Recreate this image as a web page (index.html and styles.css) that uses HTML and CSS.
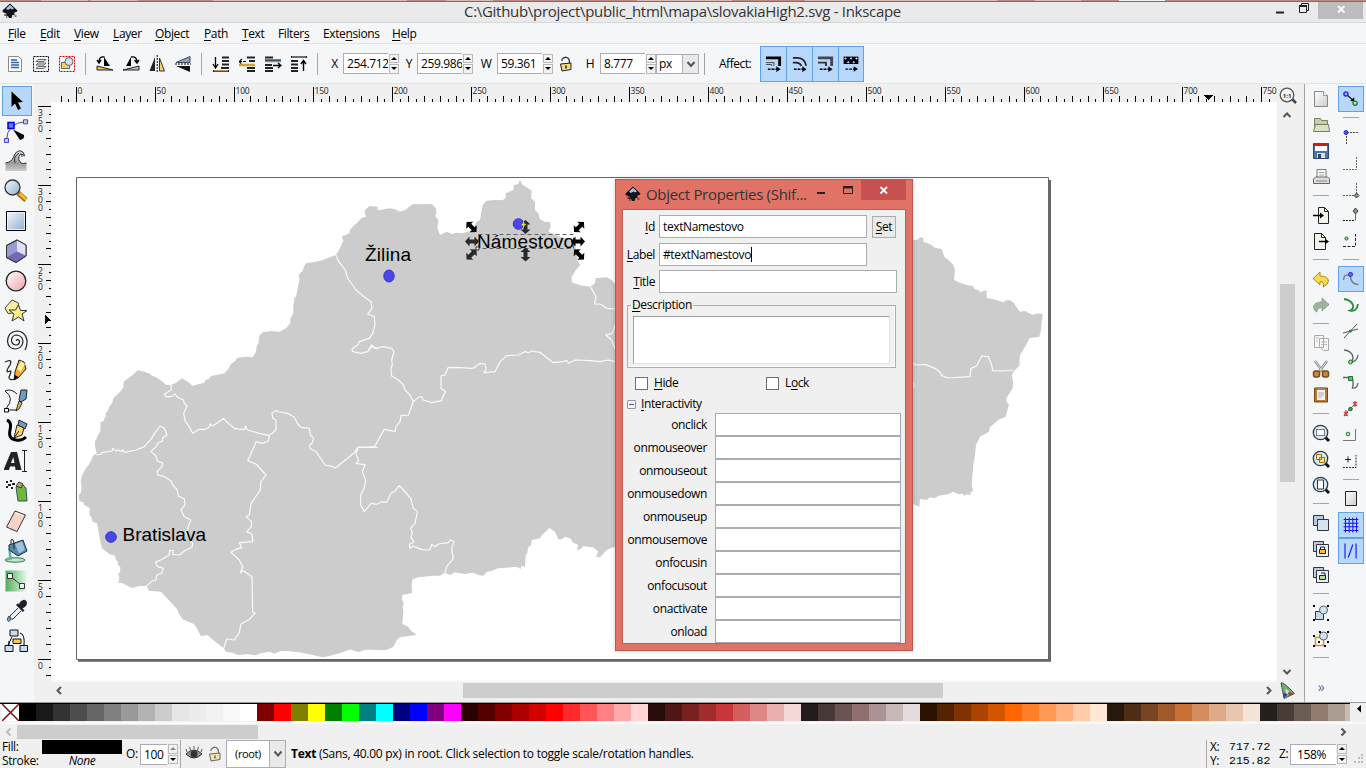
FILE: index.html
```html
<!DOCTYPE html>
<html lang="en">
<head>
<meta charset="utf-8">
<title>slovakiaHigh2.svg - Inkscape</title>
<link rel="stylesheet" href="styles.css">
</head>
<body>
<svg class="defs" width="0" height="0">
  <defs>
    <linearGradient id="gBlue" x1="0" y1="0" x2="1" y2="1"><stop offset="0" stop-color="#f4f9fd"/><stop offset="1" stop-color="#8fb0cf"/></linearGradient>
    <linearGradient id="gGrey" x1="0" y1="0" x2="1" y2="1"><stop offset="0" stop-color="#fff"/><stop offset="1" stop-color="#ccc"/></linearGradient>
    <linearGradient id="gWave" x1="0" y1="0" x2="0" y2="1"><stop offset="0" stop-color="#ddd"/><stop offset=".6" stop-color="#999"/><stop offset="1" stop-color="#ccc"/></linearGradient>
    <linearGradient id="gGreen" x1="0" y1="0" x2="1" y2="0"><stop offset="0" stop-color="#4caf5a"/><stop offset="1" stop-color="#e6f7e6"/></linearGradient>
    <linearGradient id="gPink" x1="0" y1="0" x2="1" y2="1"><stop offset="0" stop-color="#fff"/><stop offset="1" stop-color="#f2a0a8"/></linearGradient>
    <symbol id="logo" viewBox="0 0 16 16"><path d="M8 0.5L15.500 7.500Q15.500 9 13 9.300L12 10.500L13.500 11.500L10.500 12L9.500 15L7 15L6 13L3 12.500L5 11L0.800 9Q0 8 1 7Z" fill="#11131a"/><path d="M8 1.800L12 5.500L10 6.500L8.500 5.600L6 7L4 5.800Z" fill="#a9bfd8"/><path d="M2 12h2M12.500 13h2M4 14h1.500" stroke="#222"/></symbol>
    <symbol id="lock" viewBox="0 0 16 16"><path d="M4 5V3.500Q6 .5 9 1.500Q11.500 2.500 11.500 6V8" fill="none" stroke="#333" stroke-width="1.300"/><path d="M2.500 8L13 7V13.500L4 15Z" fill="#f0dc82" stroke="#222"/><path d="M8 9.500v3" stroke="#222" stroke-width="1.500"/></symbol>
    <symbol id="handle" viewBox="-8 -8 16 16"><path d="M-7 0L-2.500-5V-2H2.500V-5L7 0L2.500 5V2H-2.500V5Z"/></symbol>
  </defs>
</svg>

<div class="backdrop"></div>
<header class="titlebar">
  <svg class="app-logo" width="16" height="16"><use href="#logo"/></svg>
  <h1 class="title">C:\Github\project\public_html\mapa\slovakiaHigh2.svg - Inkscape</h1>
  <div class="win-buttons">
    <svg width="24" height="20"><path d="M8 10.500h8" stroke="#222" stroke-width="2"/></svg>
    <svg width="26" height="20"><path d="M7.500 4.500h7v6h-7zM9.500 4V1.500h7v7H15" fill="none" stroke="#222"/><path d="M7 4h8" stroke="#222" stroke-width="2"/></svg>
    <svg class="close" width="45" height="17"><path d="M20 4l6.500 6.500M26.500 4L20 10.500" stroke="#fff" stroke-width="1.800"/></svg>
  </div>
</header>
<nav class="menubar">
  <span style="width:32px"><u>F</u>ile</span><span style="width:34px"><u>E</u>dit</span><span style="width:39px"><u>V</u>iew</span><span style="width:42px"><u>L</u>ayer</span><span style="width:49px"><u>O</u>bject</span><span style="width:38px"><u>P</u>ath</span><span style="width:36px"><u>T</u>ext</span><span style="width:45px">Filter<u>s</u></span><span style="width:69px">Exte<u>n</u>sions</span><span><u>H</u>elp</span>
</nav>

<section class="toolbar">
  <svg class="ic" viewBox="0 0 24 24"><path d="M5.500 4.500h10l3 3v12h-13z" fill="#fff" stroke="#889"/><path d="M8 8h6M8 10.500h8M8 13h8M8 15.500h8" stroke="#2e62ad" stroke-width="1.500"/></svg>
  <svg class="ic" viewBox="0 0 24 24"><path d="M4.500 4.500h15v15h-15z" fill="none" stroke="#000" stroke-dasharray="2 1"/><path d="M7 16.500l2-2h8l-2 2zM7 13l2-2h8l-2 2zM7 9.500l2-2h8l-2 2z" fill="#e8e8e8" stroke="#666"/></svg>
  <svg class="ic" viewBox="0 0 24 24"><path d="M4.500 4.500h15v15h-15z" fill="none" stroke="#c00" stroke-dasharray="2 1"/><path d="M6.500 10.500h8v6h-8z" fill="#f6cf63" stroke="#665"/><circle cx="14" cy="9.500" r="4" fill="#cfe0ee" stroke="#667"/></svg>
  <i class="vsep"></i>
  <svg class="ic" viewBox="0 0 24 24"><path d="M11 14V5l6 9z"/><path d="M11.500 5Q6 4 6 10M4 8l2 3 2-3" fill="none" stroke="#000" stroke-width="1.400"/><path d="M4 14l16 4H4z" fill="#f2c24e" stroke="#222"/></svg>
  <svg class="ic" viewBox="0 0 24 24"><path d="M12 14V5l-5 9z" fill="#000"/><path d="M12 5Q18 4 18 10M15.500 8l2.500 3 2-3" fill="none" stroke="#000" stroke-width="1.400"/><path d="M20 14L4 18h16z" fill="#a9c3dc" stroke="#222"/></svg>
  <svg class="ic" viewBox="0 0 24 24"><path d="M10 5v14H4.500z" fill="#222"/><path d="M14.500 6v13h5z" fill="#f2cf7a" stroke="#333"/><path d="M12.200 3v18" stroke="#000" stroke-dasharray="2 1"/></svg>
  <svg class="ic" viewBox="0 0 24 24"><path d="M5 10.500L19 4.500v6z" fill="#8fa7bd" stroke="#445"/><path d="M5 14h14v6z" fill="#111"/><path d="M4 12h16" stroke="#000" stroke-dasharray="2 1"/></svg>
  <i class="vsep"></i>
  <svg class="ic" viewBox="0 0 24 24"><path d="M6.500 5v10M4 12l2.500 4L9 12" fill="none" stroke="#000" stroke-width="1.300"/><path d="M13 5.500h7M13 9h7M13 12.500h7M12 16h8M4 19h16" stroke="#222" stroke-width="2.200"/><path d="M5 18.800h14" stroke="#edc65a"/></svg>
  <svg class="ic" viewBox="0 0 24 24"><path d="M4 9.500h8M7 7L4 9.500L7 12" fill="none" stroke="#000" stroke-width="1.200" stroke-dasharray="3 1"/><path d="M12 5.500h8M14 9h6M12 16h8M12 19h8" stroke="#222" stroke-width="2.200"/><path d="M4 13h16" stroke="#cda33a" stroke-width="2.500"/></svg>
  <svg class="ic" viewBox="0 0 24 24"><path d="M4 5.500h8M4 13h7M4 16h8M4 19h8" stroke="#222" stroke-width="2.200"/><path d="M4 9h16" stroke="#7893ad" stroke-width="2.500"/><path d="M4 8h16" stroke="#111"/><path d="M12 13.500h8M17 11l3 2.500-3 2.500" fill="none" stroke="#000" stroke-width="1.300"/></svg>
  <svg class="ic" viewBox="0 0 24 24"><path d="M4 5h16M4 9h7M4 12.500h7M4 16h7M4 19h7" stroke="#222" stroke-width="2.200"/><path d="M5 5h14" stroke="#a9bccd"/><path d="M16.500 19V9M14 12l2.500-3.500L19 12" fill="none" stroke="#000" stroke-width="1.400"/></svg>
  <i class="vsep"></i>
  <label class="lab lx">X</label><span class="num">254.712</span><span class="spin"><i></i><i></i></span>
  <label class="lab ly">Y</label><span class="num">259.986</span><span class="spin"><i></i><i></i></span>
  <label class="lab lw">W</label><span class="num">59.361</span><span class="spin"><i></i><i></i></span>
  <svg class="tlock" width="16" height="16"><use href="#lock"/></svg>
  <label class="lab lh">H</label><span class="num">8.777</span><span class="spin"><i></i><i></i></span>
  <span class="unit"><b>px</b><svg width="16" height="18"><path d="M4.500 7l3.500 4 3.500-4" fill="none" stroke="#555" stroke-width="2"/></svg></span>
  <i class="vsep unit-sep"></i>
  <label class="affect">Affect:</label>
  <div class="toggles">
    <svg viewBox="0 0 26 36"><path d="M5 11.500h14.500V20" fill="none" stroke="#000" stroke-width="3"/><path d="M5 16.500h8.500V20M5 18.500h6V20" fill="none" stroke="#444"/><path d="M7 23.500h10" stroke="#000" stroke-dasharray="3 1" stroke-width="1.500"/><path d="M16 20.500v6l4.500-3z"/></svg>
    <svg viewBox="0 0 26 36"><path d="M6 11.500h5Q19 12 20 20M6 16.500h4Q14 17 15 20" fill="none" stroke="#222" stroke-width="1.800"/><path d="M7 23.500h10" stroke="#000" stroke-dasharray="3 1" stroke-width="1.500"/><path d="M16 20.500v6l4.500-3z"/></svg>
    <svg viewBox="0 0 26 36"><path d="M5 11.500h14.500V20" fill="none" stroke="#445" stroke-width="3"/><path d="M5 16.500h8.500V20" fill="none" stroke="#333" stroke-width="2"/><path d="M7 23.500h10" stroke="#000" stroke-dasharray="3 1" stroke-width="1.500"/><path d="M16 20.500v6l4.500-3z"/></svg>
    <svg viewBox="0 0 26 36"><path d="M5 10h16v8H5z"/><path d="M5.500 12l1.500-1.200L8.500 12 7 13.500zM11.500 12l1.500-1.200 1.500 1.200-1.500 1.500zM17.500 12l1.500-1.200 1.500 1.200-1.500 1.500zM8.500 16l1.500-1.200 1.500 1.200-1.500 1.500zM14.500 16l1.500-1.200 1.500 1.200-1.500 1.500z" fill="#b7d8fa"/><path d="M7 23.500h10" stroke="#000" stroke-dasharray="3 1" stroke-width="1.500"/><path d="M16 20.500v6l4.500-3z"/></svg>
  </div>
</section>

<main class="workspace">
  <aside class="toolbox">
    <div class="tool on"><svg viewBox="0 0 24 24"><path d="M7.500 2.500V18l3.500-3.500 3 6.500 3-1.500-3-6 5-.5z"/></svg></div>
    <div class="tool"><svg viewBox="0 0 24 24"><path d="M2.500 21Q3 4 22 2.500" fill="none" stroke="#555"/><path d="M.5 19.500h4v4h-4zM19.500.8h4v4h-4z" fill="#c8c8ff" stroke="#44d"/><path d="M4 3.500h6v6H4z" fill="#5a7bff" stroke="#00d" stroke-width="1.500"/><path d="M9 10.500L20 16Q21 20 16 21Z"/></svg></div>
    <div class="tool"><svg viewBox="0 0 24 24"><path d="M1.500 22V14Q8 13 9.500 8Q12 1 18 2Q21 3 20.500 7Q18 3.500 16 6Q13 10 17 14Q19 15 22.500 14V22Z" fill="url(#gWave)"/><path d="M1.500 14Q8 13 9.500 8Q12 1 17 2Q20 2.500 20.500 7Q17 3.500 15 7Q13.500 11 17 14Q19 15 22.500 14M11 14Q9 8 15 4M16 5Q19 5 18 8" fill="none" stroke="#333"/></svg></div>
    <div class="tool"><svg viewBox="0 0 24 24"><path d="M14 14l8 7" stroke="#a6700c" stroke-width="5"/><path d="M15.500 14.500l6.500 6" stroke="#fdb633" stroke-width="3"/><circle cx="8.500" cy="8.500" r="7.500" fill="url(#gBlue)" stroke="#333" stroke-width="1.300"/></svg></div>
    <div class="tool"><svg viewBox="0 0 24 24"><path d="M2.500 2.500h19v19h-19z" fill="url(#gBlue)" stroke="#000"/><path d="M3.500 3.500h17v17h-17z" fill="none" stroke="#fff" opacity=".7"/></svg></div>
    <div class="tool"><svg viewBox="0 0 24 24"><path d="M2.500 6.500L13 1l9 5v11l-10 6.500-9.500-5z" fill="#9a9ad4" stroke="#222"/><path d="M13 1l9 5v11l-9-4.500z" fill="#e0e0f5"/><path d="M3 18l10-5.500 9 4.500-10 6z" fill="#6d6db0"/><path d="M2.500 6.500L13 1l9 5v11l-10 6.500-9.500-5z" fill="none" stroke="#333"/></svg></div>
    <div class="tool"><svg viewBox="0 0 24 24"><circle cx="12" cy="12" r="9.800" fill="url(#gPink)" stroke="#222" stroke-width="1.300"/></svg></div>
    <div class="tool"><svg viewBox="0 0 24 24"><path d="M1 9L8 1l6.500 3-1 9.500-9.500 1z" fill="#faf0a0" stroke="#444"/><path d="M14.500 6l2 5.500h6.500L18 15l2 7-5.500-4L8 22l2-7-5-4h6.500z" fill="#fbf08a" stroke="#333"/></svg></div>
    <div class="tool"><svg viewBox="0 0 24 24"><path d="M12 11.500Q14 9.500 15.500 12Q15.500 16 12 16Q7.500 15.500 7.500 11Q8 6 13 6Q19 7 19 13Q18 19 12 20Q4 20 3.500 12Q4 3 12.500 2Q21 2 23 11Q23.500 16 21 21" fill="none" stroke="#222" stroke-width="1.200"/></svg></div>
    <div class="tool"><svg viewBox="0 0 24 24"><path d="M1 3Q9-1 6 6Q0 15 6 12Q8 12 5 18Q5 22 11 20" fill="none" stroke="#222" stroke-width="1.300"/><path d="M15 1l5 2 2 7-8 9-4 2 1-8z" fill="#f7a928" stroke="#222"/><path d="M13 10l4 3 4-8-4-3z" fill="#fff0a8"/><path d="M10 21l1-5 3.500 2z"/></svg></div>
    <div class="tool"><svg viewBox="0 0 24 24"><path d="M2.500 20V19Q11 9 1 2Q7-1 13 5M5 21h8" fill="none" stroke="#222"/><path d="M.5 19.500h4v3.500h-4z" fill="#fff" stroke="#000"/><path d="M17 1h6l-1 9-5 3-2-2z" fill="#6d9dc4" stroke="#222"/><path d="M15 12l3 2-3 6-3 2z" fill="#f0c050" stroke="#222"/></svg></div>
    <div class="tool"><svg viewBox="0 0 24 24"><path d="M3 1Q8 3 6 11Q4 20 12 21Q18 22 22 18" fill="none" stroke="#000" stroke-width="3"/><path d="M15 1l8 4-2 5-7-4z" fill="#6d9dc4" stroke="#222"/><path d="M13 6l7 3-2 7-8 3z" fill="#f7d56a" stroke="#222"/><path d="M10 19l5-7" stroke="#222"/></svg></div>
    <div class="tool"><svg viewBox="0 0 24 24"><path d="M20.500 2v20M18 1.500h5M18 22.500h5" stroke="#222"/><path fill-rule="evenodd" d="M7 3h6l4.500 18h-6l-.5-3.500H6L5 21H-.5zM9.300 8L7 14h3.500z" fill="#222"/></svg></div>
    <div class="tool"><svg viewBox="0 0 24 24"><path d="M12 8l6-3 4 4 1 13h-9z" fill="#70b83c" stroke="#355"/><path d="M12 7l3-4 4 2-2 4z" fill="#b5aa6a" stroke="#333"/><path d="M2 3h2M6 2h2M4 6h3M8 5h3M2 8h2M7 9h2" stroke="#222" stroke-width="2"/></svg></div>
    <div class="tool"><svg viewBox="0 0 24 24"><path d="M11 2l10.500 4L13 22.500 2.500 18z" fill="#f7d3c6" stroke="#333"/><path d="M11 3.500l8.500 3" stroke="#fff"/></svg></div>
    <div class="tool"><svg viewBox="0 0 24 24"><ellipse cx="11" cy="21" rx="10" ry="2.200" fill="#bfe8c8" stroke="#375"/><path d="M2.500 21Q4 19 6.500 19.500L5.500 10" fill="none" stroke="#5b9" stroke-width="2.500"/><path d="M5 6l14-5 4 11-9 5-9-6z" fill="#5588ab" stroke="#234"/><path d="M11 5l7-2.500 3 8-6 4z" fill="#9fc3dc"/><path d="M7 5V1q2-2 3 3v6" fill="none" stroke="#222"/></svg></div>
    <div class="tool"><svg viewBox="0 0 24 24"><path d="M1.500 1.500h21v21h-21z" fill="url(#gGreen)"/><path d="M6 7l11 9" stroke="#333"/><path d="M3.500 4.500h5v5h-5zM15.500 14.500h5v5h-5z" fill="#eef" stroke="#333"/></svg></div>
    <div class="tool"><svg viewBox="0 0 24 24"><path d="M14 9L6 17v3h3l8-8" fill="#e8f2fa" stroke="#333"/><path d="M12 6l7 7 1.500-1.500-2-2Q23 7 23 4Q22 0 19 1Q16 2 15 5L13.500 4.500z" fill="#1b222c"/><path d="M5 17Q2 21 4.500 22.500Q8 21 5 17z" fill="#7aa7d0" stroke="#345"/></svg></div>
    <div class="tool"><svg viewBox="0 0 24 24"><path d="M8 8L4 16M16 4q5 1 4 12M5 12v4" fill="none" stroke="#000"/><path d="M6 1h8v6H6zM1 16.500h8v6H1zM16 16.500h7.500v6H16z" fill="#c7dcf0" stroke="#111"/><path d="M9 10h8v4.500H9z" fill="#f9cc52" stroke="#111"/></svg></div>
  </aside>

  <div class="viewport">
    <div class="corner"></div>
    <svg id="ruler-top" class="ruler" width="1226" height="18" viewBox="51 84 1226 18"></svg>
    <div class="zoom-lock"><svg width="20" height="18" viewBox="0 0 20 18"><path d="M12 12l5 5" stroke="#444" stroke-width="2.500"/><circle cx="8" cy="9" r="6.800" fill="#f4f4f4" stroke="#555" stroke-width="1.300"/><text class="zt" x="3.800" y="11.500">1:1</text></svg></div>
    <svg id="ruler-left" class="ruler" width="17" height="578" viewBox="34 102 17 578"></svg>
    <svg class="canvas" width="1226" height="578" viewBox="51 102 1226 578">
      <path d="M1049 180h2v481.700H78V659H1049z" fill="#666"/>
      <path d="M76.500 177.500H1048.500V659.500H76.500z" fill="#fff" stroke="#666"/>
      <g fill="#ccc">
        <path transform="translate(76 170) scale(.33333)" d="M905 110L880 108 866 122 870 140 855 155 848 168 838 175 832 190 820 200 811 200 802 196 803 215 798 222 795 235 780 255 762 262 740 270 715 276 690 280 684 290 680 302 668 315 671 330 667 345 664 362 660 380 655 383 654 400 652 402 652 430 643 446 643 460 630 475 610 485 585 483 560 487 550 497 547 520 542 530 540 545 530 562 510 560 485 563 475 575 465 582 457 597 445 610 425 614 405 618 398 628 388 630 386 638 370 642 350 647 335 635 318 625 310 631 300 638 285 645 270 645 262 637 250 628 245 625 225 615 222 611 205 605 185 601 170 615 143 635 142 652 134 664 112 685 108 700 100 710 94 725 88 730 90 738 85 745 84 752 74 757 73 785 66 795 60 810 57 813 57 830 62 850 50 858 48 866 38 885 30 895 17 918 14 935 17 950 15 967 8 975 10 993 22 997 25 1005 42 1015 40 1035 46 1040 50 1055 63 1060 68 1085 72 1110 78 1135 100 1152 117 1157 120 1170 126 1175 125 1185 133 1190 132 1207 127 1210 130 1222 127 1240 137 1238 150 1245 168 1254 190 1248 213 1247 218 1262 255 1265 280 1292 303 1317 308 1330 320 1348 345 1358 353 1362 360 1370 375 1398 395 1395 405 1405 420 1417 443 1435 450 1445 470 1448 485 1455 515 1453 540 1456 555 1450 580 1445 595 1451 615 1443 640 1444 670 1447 700 1453 740 1462 760 1458 790 1450 825 1438 850 1446 870 1438 905 1440Z"/>
        <path transform="translate(340 170) scale(.33333)" d="M-12 255L0 235 10 212 5 200 28 190 30 180 40 168 55 155 65 143 78 140 75 120 95 109 105 122 120 120 150 115 165 118 180 125 200 118 205 112 220 102 245 103 275 102 288 115 289 130 285 137 295 150 292 175 300 195 320 185 335 192 350 188 365 190 385 185 400 175 410 155 420 150 424 125 428 105 440 92 465 90 488 91 497 83 497 70 520 60 522 45 535 42 540 30 548 45 560 52 575 62 573 85 585 95 585 120 595 130 600 148 615 156 630 155 632 170 625 185 660 200 680 205 700 215 706 230 712 250 711 270 721 285 708 300 695 320 695 337 720 346 750 350 765 340 767 325 800 322 815 330 830 348 900 380V1100L825 1130 815 1133 800 1140 780 1162 768 1160 775 1145 760 1132 740 1130 730 1128 725 1135 710 1142 715 1125 700 1118 690 1105 675 1100 665 1108 655 1108 645 1085 628 1074 620 1082 605 1096 600 1105 575 1110 572 1128 565 1130 562 1150 557 1155 555 1190 545 1187 542 1197 530 1190 500 1193 475 1195 455 1203 440 1206 430 1217 415 1215 400 1208 375 1212 360 1210 345 1207 330 1215 314 1208 300 1217 275 1217 250 1220 235 1222 218 1228 215 1240 216 1268 200 1273 188 1274 185 1285 191 1300 188 1310 190 1325 187 1362 205 1370 213 1382 230 1395 205 1398 180 1402 170 1410 160 1430 140 1440 120 1441 100 1438 75 1439 50 1445 30 1437 0 1447 -12 1447Z"/>
        <path transform="translate(610 175) scale(.33333)" d="M500 200L905 194 920 195 932 186 940 190 940 200 960 207 975 218 995 222 1003 245 1015 255 1030 270 1035 285 1032 315 1050 323 1070 330 1088 333 1095 343 1106 345 1110 352 1130 345 1130 368 1150 373 1180 382 1190 376 1200 376 1213 385 1216 392 1230 410 1245 408 1268 420 1283 415 1298 418 1295 440 1293 465 1288 485 1258 490 1250 508 1230 540 1228 572 1210 590 1206 600 1209 620 1208 640 1195 660 1189 670 1189 680 1197 688 1192 705 1187 725 1165 735 1140 757 1137 770 1110 785 1098 810 1095 840 1090 870 1085 930 1090 948 1082 950 1082 960 1072 958 1060 962 1060 956 1045 958 1030 950 1015 958 985 962 975 970 960 967 950 975 930 972 928 995 905 985 500 980Z"/>
      </g>
      <g fill="none" stroke="#fafafa" stroke-width="3.600" stroke-linejoin="round">
        <g transform="translate(76 170) scale(.33333)">
          <path d="M60 855L75 852 77 848 108 843 110 835 120 843 125 840 137 845 140 840 147 847 180 840 205 830 215 818 225 808 237 788 252 768 265 775 273 795 260 804 260 812 245 820 240 830 225 845 240 858 243 872 260 880 258 890 243 905 245 915 265 920 285 932 290 945 303 958 307 978 325 987 327 1005 315 1020 325 1040 345 1050 338 1065 335 1080 329 1087 350 1120 348 1132 325 1143 310 1155 290 1153 292 1142 280 1142 280 1155 250 1172 238 1177 245 1190 262 1195 257 1210 242 1215 240 1230 230 1232 213 1247"/>
          <path d="M285 645L286 660 265 672 270 680 285 680 298 672 305 682 322 690 325 700 333 708 323 730 328 755 335 762 350 790 370 778 388 778 400 772 402 762 410 768 425 758 443 745 455 758 475 775 490 778 507 778 508 768 515 780 550 790 580 797 600 780 600 750 590 745 588 728 600 722 610 726 635 730 655 742 665 762 675 772 700 775 703 795 713 805 708 820 701 825 702 835 720 845 747 885 770 890 778 894 835 848 845 832 905 832"/>
          <path d="M580 797L577 813 560 820 540 815 530 840 515 872 540 882 570 915 555 935 553 960 525 1000 520 1035 510 1040 527 1055 525 1072 512 1085 528 1092 530 1115 490 1118 497 1133 480 1138 465 1147 490 1170 500 1190 493 1208 502 1202 528 1220 530 1325 537 1330 520 1348 495 1362 490 1388 475 1410 452 1407 443 1435"/>
          <path d="M780 255L788 275 808 300 815 325 830 345 840 360 860 377 885 395 888 415 875 432 895 440 897 465 890 490 880 505 850 515 845 525 828 537 830 545 855 550 875 545 887 530 905 537"/>
        </g>
        <g transform="translate(340 170) scale(.33333)">
          <path d="M85 540L95 525 105 535 130 530 155 535 162 545 155 570 157 585 153 595 155 618 175 630 190 645 195 660 210 675 220 695 235 682 245 680 250 690 275 698 305 692 307 683 317 665 303 655 303 618 315 615 325 592 360 593 400 595 420 580 435 582 438 597 432 608 465 605 480 575 500 557 535 555 555 545 565 548 575 543 600 547 640 578 670 575 680 571 685 580 705 570 750 572 780 575 805 570 825 575"/>
          <path d="M220 695L205 735 183 737 180 755 168 770 165 785 133 778 120 800 105 828 80 832 55 832 48 850"/>
          <path d="M48 850L56 872 47 880 75 884 67 905 77 932 72 955 62 975 62 1005 73 1025 93 1000 110 1003 125 995 140 997 153 970 165 963 178 947 188 957 212 985 220 1015 232 1025 225 1060 212 1075 217 1088 213 1103 222 1115 208 1123 210 1135 218 1128 245 1139 270 1140 275 1123 285 1130 295 1122 325 1118 330 1110 342 1115 335 1135 340 1165 320 1190 316 1208"/>
          <path d="M750 348L768 380 763 402 780 402 800 415 830 417M827 460L817 490 797 495 815 510 827 540"/>
        </g>
        <g transform="translate(610 175) scale(.33333)">
          <path d="M900 560L920 570 945 568 975 580 990 592 995 602 1015 609 1080 605 1083 580 1100 573 1115 543 1135 545 1145 570 1148 587 1180 588 1210 585M905 618Q920 632 905 642"/>
        </g>
      </g>
      <g fill="#4a46ea" stroke="#3833c8">
        <circle cx="111" cy="537" r="5.300"/><ellipse cx="389" cy="276" rx="5.200" ry="6"/><circle cx="518.500" cy="224" r="5.300"/>
      </g>
      <g class="city">
        <text x="122.500" y="541" textLength="83.500">Bratislava</text>
        <text x="365" y="261" textLength="46">Žilina</text>
        <text x="477" y="248" textLength="97">Námestovo</text>
      </g>
      <path d="M478.500 234.500h95v14h-95z" fill="none" stroke="#444" stroke-dasharray="4 3" stroke-width=".8"/>
      <g fill="#000">
        <use href="#handle" x="-8" y="-8" width="16" height="16" transform="translate(471.500 227) rotate(45)"/>
        <use href="#handle" x="-8" y="-8" width="16" height="16" transform="translate(579 227) rotate(-45)"/>
        <use href="#handle" x="-8" y="-8" width="16" height="16" transform="translate(579 254.500) rotate(45)"/>
        <use href="#handle" x="-8" y="-8" width="16" height="16" transform="translate(578 241.500)"/>
      </g>
      <g fill="#2a2a2a">
        <use href="#handle" x="-8" y="-8" width="16" height="16" transform="translate(471.500 254.500) rotate(-45)"/>
        <use href="#handle" x="-8" y="-8" width="16" height="16" transform="translate(472 241.500)"/>
        <use href="#handle" x="-8" y="-8" width="16" height="16" transform="translate(525.500 227) rotate(90)"/>
        <use href="#handle" x="-8" y="-8" width="16" height="16" transform="translate(525.500 254.500) rotate(90)"/>
      </g>
      <path d="M523.500 221l1 2.500 2 1-2 1-1 2.500-1-2.500-1.500-1 1.500-1z" fill="#e8e000"/>
      <path d="M476 247h3v3h-3z" fill="#fff" stroke="#333"/>
    </svg>
    <div class="vscroll"><svg width="15" height="12"><path d="M3.500 8L7 4.500 10.500 8" fill="none" stroke="#555" stroke-width="2"/></svg><i></i><svg width="15" height="12"><path d="M3.500 5L7 8.500 10.500 5" fill="none" stroke="#555" stroke-width="2"/></svg></div>
    <div class="corner"></div>
    <div class="hscroll"><svg width="12" height="15"><path d="M10 4L6.500 7.500 10 11" fill="none" stroke="#555" stroke-width="2"/></svg><i></i><svg width="12" height="15"><path d="M2 4l3.500 3.500L2 11" fill="none" stroke="#555" stroke-width="2"/></svg></div>
    <div class="cms"><svg width="16" height="18" viewBox="0 0 16 18"><path d="M1 1Q3 0 9 6L14.500 11.500 4 16.500Z" fill="#6cb070" stroke="#555"/><path d="M8 10l6 1.500-5 2.500z" fill="#c2333a"/><path d="M3 11l5 1-4 4z" fill="#3436b0"/><path d="M5 7l4 2-2 4z" fill="#dde"/></svg></div>
  </div>

  <aside class="commands">
    <div class="col">
      <svg class="c" viewBox="0 0 26 26"><path d="M6.500 5.500h9l4 4v11h-13z" fill="url(#gGrey)" stroke="#888"/><path d="M15.500 5.500v4h4" fill="#fff" stroke="#999"/></svg>
      <svg class="c" viewBox="0 0 26 26"><path d="M6.500 19V6.500h6l1 2h6V19z" fill="#c6cdb0" stroke="#77805f"/><path d="M5.500 19.500l2-7h13l1 7z" fill="#dbe2c4" stroke="#77805f"/></svg>
      <svg class="c" viewBox="0 0 26 26"><path d="M5.500 5.500h15v15h-15z" fill="#4d74aa" stroke="#2a4470"/><path d="M7 6h12v7H7z" fill="#fff"/><path d="M6 5h14v3H6z" fill="#d8141c"/><path d="M9 15h8v5H9z" fill="#ddd"/><path d="M10 16h3v4h-3z" fill="#345"/></svg>
      <svg class="c" viewBox="0 0 26 26"><path d="M9 14V5.500h9V14" fill="#fff" stroke="#777"/><path d="M11 8.500h5M11 11h5" stroke="#999"/><path d="M5.500 19.500V15l2-2h12l2 2v4.500z" fill="#ddd" stroke="#666"/><path d="M8 17h11" stroke="#888"/></svg>
      <i class="hs"></i>
      <svg class="c" viewBox="0 0 26 26"><path d="M10.500 5.500h6l4 4v12h-10z" fill="#f4f4ee" stroke="#222"/><path d="M16.500 5.500v4h4" fill="none" stroke="#222"/><path d="M5 13.500h8" stroke="#000" stroke-width="1.500"/><path d="M12 10.500v6l4-3z"/></svg>
      <svg class="c" viewBox="0 0 26 26"><path d="M6.500 5.500h7l4 4v12h-11z" fill="#f4f4ee" stroke="#222"/><path d="M13.500 5.500v4h4" fill="none" stroke="#222"/><path d="M11 13.500h8" stroke="#000" stroke-width="1.500"/><path d="M17 10.500v6l4-3z"/></svg>
      <i class="hs"></i>
      <svg class="c" viewBox="0 0 26 26"><path d="M5 12.500L12 6v4Q20 10 20.500 15Q20 19 15 21Q17 16 12 15.500V19z" fill="#f5d94e" stroke="#b08a18"/></svg>
      <svg class="c" viewBox="0 0 26 26"><path d="M21 12.500L14 6v4Q6 10 5.500 15Q6 19 9 20Q9 16 14 15.500V19z" fill="#9db39d" stroke="#677767" stroke-dasharray="1 1"/></svg>
      <i class="hs"></i>
      <svg class="c" viewBox="0 0 26 26"><path d="M6.500 5.500h9v12h-9zM11.500 8.500h9v12h-5l-4-4z" fill="#f7f7f7" stroke="#aaa"/><path d="M13 12h6M13 14.500h6M8 8h3M8 11h2" stroke="#bbb"/></svg>
      <svg class="c" viewBox="0 0 26 26"><path d="M7 5l8 11M19 5l-8 11" stroke="#8a8f8a" stroke-width="2.500"/><path d="M7 5l8 11M19 5l-8 11" stroke="#eee" stroke-width=".8"/><rect x="5.500" y="15" width="6" height="6" rx="2" fill="#c98a3a" stroke="#7a4a10" stroke-width="1.500"/><rect x="14.500" y="15" width="6" height="6" rx="2" fill="#c98a3a" stroke="#7a4a10" stroke-width="1.500"/></svg>
      <svg class="c" viewBox="0 0 26 26"><path d="M6.500 6h13v14h-13z" fill="#b87a2c" stroke="#74480e"/><path d="M9 8h8v10H9z" fill="#f4f4f4"/><path d="M10 5h6v3h-6z" fill="#888"/><path d="M10 11h6M10 13h6M10 15h4" stroke="#aaa"/></svg>
      <i class="hs"></i>
      <svg class="c" viewBox="0 0 26 26"><path d="M17 17l4 4" stroke="#111" stroke-width="3"/><circle cx="12.500" cy="12.500" r="7.200" fill="#dce9f5" stroke="#2b3b4b" stroke-width="1.300"/><path d="M8.500 9.500h8v6h-8z" fill="#fff" stroke="#000" stroke-dasharray="1 1"/></svg>
      <svg class="c" viewBox="0 0 26 26"><path d="M17 17l4 4" stroke="#111" stroke-width="3"/><circle cx="12.500" cy="12.500" r="7.200" fill="#dce9f5" stroke="#2b3b4b" stroke-width="1.300"/><path d="M8.500 8.500h5v5h-5zM11.500 11.500h5v5h-5z" fill="#f8e6a8" stroke="#a06c10"/></svg>
      <svg class="c" viewBox="0 0 26 26"><path d="M17 17l4 4" stroke="#111" stroke-width="3"/><circle cx="12.500" cy="12.500" r="7.200" fill="#dce9f5" stroke="#2b3b4b" stroke-width="1.300"/><path d="M9.500 8h6v9h-6z" fill="#fff" stroke="#333"/></svg>
      <i class="hs"></i>
      <svg class="c" viewBox="0 0 26 26"><path d="M5.500 5.500h10v10h-10z" fill="#b9cbdc" stroke="#334"/><path d="M9.500 9.500h11v11h-11z" fill="#d6e4f1" stroke="#334"/></svg>
      <svg class="c" viewBox="0 0 26 26"><path d="M5.500 5.500h10v10h-10z" fill="#b9cbdc" stroke="#334"/><path d="M8.500 8.500h12v12h-12z" fill="#e8f0f7" stroke="#334"/><path d="M12.500 14v-3h4v3" fill="none" stroke="#222"/><path d="M11.500 13.500h6v4h-6z" fill="#f8c030" stroke="#222"/></svg>
      <svg class="c" viewBox="0 0 26 26"><path d="M5.500 5.500h10v10h-10z" fill="#b9cbdc" stroke="#334"/><path d="M8.500 8.500h12v12h-12z" fill="#e8f0f7" stroke="#334"/><path d="M13 11h4v3" fill="none" stroke="#222"/><path d="M11.500 13.500h6v4h-6z" fill="#aede9e" stroke="#222"/></svg>
      <i class="hs"></i>
      <svg class="c" viewBox="0 0 26 26"><path d="M7.500 11.500h8v8h-8z" fill="#c6d9ea" stroke="#333"/><circle cx="15.500" cy="10" r="4" fill="#d3e2ef" stroke="#566"/><path d="M5 5h2v2H5zM19 5h2v2h-2zM5 19h2v2H5zM19 19h2v2h-2z"/></svg>
      <svg class="c" viewBox="0 0 26 26"><path d="M7.500 11.500h8v8h-8z" fill="#fff" stroke="#d49a1c" stroke-width="1.500"/><circle cx="15.500" cy="10" r="4" fill="#d3e2ef" stroke="#566"/><path d="M5 9h2v2H5zM5 19h2v2H5zM10 15h2v2h-2zM19 5h2v2h-2zM11 5h2v2h-2zM16 19h2v2h-2zM19 15h2v2h-2z"/></svg>
      <i class="hs"></i>
      <span class="more">»</span>
    </div>
    <div class="col">
      <svg class="c on" viewBox="0 0 26 26"><path d="M8 8l8 7" stroke="#000" stroke-width="1.300"/><path d="M12 15l4.500-4v5z"/><circle cx="7.500" cy="7.500" r="2.200" fill="#aaf" stroke="#22e" stroke-width="1.500"/><circle cx="17.500" cy="17.500" r="2.200" fill="#bdb" stroke="#184" stroke-width="1.500"/></svg>
      <i class="hs"></i>
      <svg class="c" viewBox="0 0 26 26"><path d="M8.500 20V8.500H21" fill="none" stroke="#444" stroke-dasharray="2 1"/><circle cx="8" cy="8.500" r="2" fill="#55f" stroke="#22d"/></svg>
      <svg class="c" viewBox="0 0 26 26"><path d="M5 19.500h13.500V6" fill="none" stroke="#575" stroke-dasharray="2 1"/></svg>
      <svg class="c" viewBox="0 0 26 26"><path d="M5 19.500h13.500V6" fill="none" stroke="#555" stroke-dasharray="2 1"/><path d="M18.500 17l2.500 2.500-2.500 2.500-2.500-2.500z" fill="#7a9a7a" stroke="#444"/></svg>
      <svg class="c" viewBox="0 0 26 26"><path d="M5 18.500h11.500" stroke="#222" stroke-dasharray="2 1"/><path d="M17.500 18.500V10" stroke="#666"/><path d="M17.500 6l2.500 3-2.500 3-2.500-3z" fill="#7a9a7a" stroke="#444"/></svg>
      <svg class="c" viewBox="0 0 26 26"><path d="M5 18.500h12.500V6" fill="none" stroke="#222" stroke-dasharray="3 1.500"/><circle cx="8.500" cy="10.500" r="1.600" fill="#8c8" stroke="#464"/></svg>
      <i class="hs"></i>
      <svg class="c on" viewBox="0 0 26 26"><path d="M5 14q0-7 7-5q1 10 9 10" fill="none" stroke="#778" stroke-width="1.500"/><circle cx="12.500" cy="8" r="2.200" fill="#66f" stroke="#22d"/></svg>
      <svg class="c" viewBox="0 0 26 26"><path d="M6 7Q13 8 15 13Q16 17 12 18.500Q19 20 20 12" fill="none" stroke="#2c8c3c" stroke-width="1.800"/></svg>
      <svg class="c" viewBox="0 0 26 26"><path d="M5 15l15-4M6 20L19 6" stroke="#555"/><circle cx="12.500" cy="13" r="1.500" fill="#284"/></svg>
      <svg class="c" viewBox="0 0 26 26"><path d="M6 6Q14 7 15 13Q15 17 12.500 18Q19 18 20 11" fill="none" stroke="#667" stroke-width="1.400"/><circle cx="12.500" cy="18" r="2" fill="#8d8" stroke="#272"/></svg>
      <svg class="c" viewBox="0 0 26 26"><path d="M5 7.500h9Q16 12 14.500 18Q19 19 20 13" fill="none" stroke="#667" stroke-width="1.400"/><path d="M10.500 6.500h4v4h-4z" fill="#6b8" stroke="#273"/></svg>
      <svg class="c" viewBox="0 0 26 26"><path d="M6 19L19 6" stroke="#777"/><path d="M6 16l4 4M6 20l4-4M8 14v6M15 6l4 4M15 10l4-4M17 5v6" stroke="#c44" stroke-width="1.200"/><circle cx="12.500" cy="13" r="1.800" fill="#3a4" stroke="#263"/></svg>
      <svg class="c" viewBox="0 0 26 26"><path d="M5 18.500h12.500V7" fill="none" stroke="#777"/><circle cx="10" cy="12" r="1.800" fill="#afa" stroke="#273"/></svg>
      <svg class="c" viewBox="0 0 26 26"><path d="M5 19.500h13V7" fill="none" stroke="#333" stroke-dasharray="2 1"/><path d="M7 11.500h6M10 8.500v6" stroke="#222"/></svg>
      <i class="hs"></i>
      <svg class="c" viewBox="0 0 26 26"><path d="M7.500 5.500h11v14h-11z" fill="url(#gGrey)" stroke="#222"/></svg>
      <svg class="c on" viewBox="0 0 26 26"><path d="M5 7h16M5 11h16M5 15h16M5 19h16M7 5v16M11 5v16M15 5v16M19 5v16" stroke="#11e" stroke-width="1.100"/></svg>
      <svg class="c on" viewBox="0 0 26 26"><path d="M6.500 5v16M18.500 5v16M10 20l5-14" stroke="#22e" stroke-width="1.300"/></svg>
    </div>
  </aside>

  <section class="dialog">
    <header class="d-title">
      <svg class="d-logo" width="16" height="16"><use href="#logo"/></svg>
      <span class="d-name">Object Properties (Shif...</span>
      <svg width="26" height="20"><path d="M7 13h8" stroke="#222" stroke-width="2"/></svg>
      <svg width="26" height="20"><path d="M7.500 6.500h9v7h-9z" fill="none" stroke="#222"/><path d="M7 7.500h10" stroke="#222" stroke-width="2"/></svg>
      <svg class="d-close" width="45" height="20"><path d="M19.500 7l6.500 6.500M26 7l-6.500 6.500" stroke="#fff" stroke-width="1.800"/></svg>
    </header>
    <div class="d-body">
      <div class="row r1"><label><u>I</u>d</label><span class="field f1">textNamestovo</span><button class="set"><u>S</u>et</button></div>
      <div class="row r2"><label><u>L</u>abel</label><span class="field f1">#textNamestovo<i class="caret"></i></span></div>
      <div class="row r3"><label><u>T</u>itle</label><span class="field f2"></span></div>
      <fieldset class="desc"><legend><u>D</u>escription</legend><div class="area"></div></fieldset>
      <div class="checks"><i class="box"></i><span class="hide"><u>H</u>ide</span><i class="box"></i><span>L<u>o</u>ck</span></div>
      <div class="expander"><i></i><span><u>I</u>nteractivity</span></div>
      <div class="events">
        <label>onclick</label><span></span>
        <label>onmouseover</label><span></span>
        <label>onmouseout</label><span></span>
        <label>onmousedown</label><span></span>
        <label>onmouseup</label><span></span>
        <label>onmousemove</label><span></span>
        <label>onfocusin</label><span></span>
        <label>onfocusout</label><span></span>
        <label>onactivate</label><span></span>
        <label>onload</label><span></span>
      </div>
    </div>
  </section>
</main>

<section class="palette"><div id="swatches" class="swatches"></div><svg width="12" height="18"><path d="M11 2v7.500L7 5.800z"/></svg></section>
<section class="pal-scroll"><svg width="17" height="14"><path d="M10.500 3.500L7 7l3.500 3.500" fill="none" stroke="#bbb" stroke-width="2"/></svg><i></i><svg width="17" height="14"><path d="M5.500 3.500L9 7 5.500 10.500" fill="none" stroke="#555" stroke-width="2"/></svg></section>

<footer class="status">
  <div class="fs-labels"><span>Fill:</span><span>Stroke:</span></div>
  <div class="fs-vals"><i></i><em>None</em></div>
  <label class="o">O:</label><span class="num s-op">100</span><span class="spin"><i class="dim"></i><i></i></span>
  <i class="ssep"></i>
  <svg class="eye" width="18" height="16" viewBox="0 0 18 16"><path d="M1 8Q9 0 17 8Q9 16 1 8z" fill="#999" stroke="#333"/><circle cx="9" cy="8" r="3.500" fill="#333"/><path d="M2 6L1 3M5.500 4L4.500 1M9 3V0M12.500 4l1-3M16 6l1-3" stroke="#555"/></svg>
  <svg class="s-lock" width="16" height="16"><use href="#lock"/></svg>
  <span class="layer"><b>(root)</b><svg width="16" height="26"><path d="M4.500 10.500l3.500 4 3.500-4" fill="none" stroke="#555" stroke-width="2"/></svg></span>
  <p class="msg"><strong>Text</strong> (Sans, 40.00 px) in root. Click selection to toggle scale/rotation handles.</p>
  <div class="coords"><span>X:</span><code>717.72</code><span>Y:</span><code>215.82</code></div>
  <label class="z">Z:</label><span class="num s-zoom">158%</span><span class="spin"><i></i><i></i></span>
  <svg class="grip" width="10" height="10"><path d="M7 0h2v2H7zM4 3h2v2H4zM7 3h2v2H7zM0 7h2v2H0zM4 7h2v2H4zM7 7h2v2H7z" fill="#bbb"/></svg>
</footer>
<script src="script.js"></script>
</body>
</html>
```
FILE: styles.css
```css
* { box-sizing: border-box; }
body {
  margin: 0; width: 1366px; height: 768px; overflow: hidden;
  display: flex; flex-direction: column;
  background: #f0f0f0; color: #000;
  font: 12px/16px "Open Sans", "Noto Sans", sans-serif; letter-spacing: -0.38px;
}
svg { display: block; flex: none; }
.defs { position: absolute; }
u { text-decoration: underline; text-underline-offset: 2px; text-decoration-thickness: 1px; text-decoration-skip-ink: none; }

.backdrop {
  height: 2px; flex: none; border-bottom: 1px solid #8f665f;
  background: linear-gradient(90deg, #bc8b82 41px, #d9bbb5 41px 88px, #bc8b82 88px 91px, #d9bbb5 91px 138px, #bc8b82 138px 213px, #d9bbb5 213px 407px, #bc8b82 407px 446px, #d9bbb5 446px 493px, #bc8b82 493px 637px, #d9bbb5 637px 732px, #bc8b82 732px 805px, #d9bbb5 805px 997px, #bc8b82 997px 1035px, #d9bbb5 1035px 1081px, #bc8b82 1081px 1119px, #f6f6f0 1119px 1165px, #bc8b82 1165px);
}
.titlebar { height: 21px; flex: none; display: flex; background: #eaeaea; border-bottom: 1px solid #d5d8da; }
.app-logo { margin: 1px 0 0 2px; }
.title { flex: 1; margin: 0 0 0 446px; font-weight: 400; font-size: 15px; line-height: 19px; letter-spacing: -0.3px; color: #333; white-space: nowrap; }
.win-buttons { display: flex; margin-right: 3px; }
.close { background: #bcbcbc; }

.menubar { height: 21px; flex: none; display: flex; padding-left: 8px; line-height: 22px; background: #f5f6f8; border-bottom: 1px solid #e2e4e7; }
.toolbar { height: 40px; flex: none; display: flex; align-items: center; padding-left: 2px; background: #f5f6f8; border-bottom: 1px solid #e2e4e7; }
.ic { width: 24px; height: 24px; margin: 0 1px; }
.vsep { width: 1px; height: 22px; background: #a5a6a8; margin: 0 6px 0 5px; flex: none; }
.lab { flex: none; text-align: center; }
.lx { width: 19px; padding-left: 2px; }
.ly { width: 18px; padding-left: 2px; }
.lw { width: 24px; padding-left: 2px; }
.lh { width: 26px; padding-left: 6px; }
.num { flex: none; width: 45px; height: 21px; padding-left: 3px; background: #fff; border: 1px solid #abadb3; border-right: 0; line-height: 20px; white-space: nowrap; overflow: hidden; }
.spin { flex: none; width: 10px; height: 20px; margin-left: 1px; display: flex; flex-direction: column; gap: 1px; }
.spin i { flex: 1; border: 1px solid #b8b8b8; background: #f3f3f3; display: flex; justify-content: center; align-items: center; }
.spin i::before { content: ""; border: 3px solid transparent; border-top-width: 0; border-bottom-color: #000; }
.spin i:last-child::before { border-width: 3px 3px 0; border-color: #000 transparent transparent; }
.spin .dim::before { border-bottom-color: #888; }
.tlock { margin: 0 0 0 5px; }
.unit { flex: none; display: flex; width: 43px; height: 20px; background: #fff; border: 1px solid #abadb3; }
.unit b { flex: 1; font-weight: 400; padding-left: 2px; line-height: 18px; }
.unit svg, .layer svg { background: #e9e9e9; border-left: 1px solid #abadb3; }
.unit-sep { margin: 0 0 0 5px; }
.affect { width: 41px; margin-left: 14px; letter-spacing: -0.5px; white-space: nowrap; }
.toggles { display: flex; }
.toggles svg { width: 26px; height: 36px; background: #b7d8fa; border: 1px solid #62a2e4; border-right-width: 0; }
.toggles svg:last-child { border-right-width: 1px; }

.workspace { height: 618px; flex: none; display: flex; position: relative; }
.toolbox { width: 34px; padding: 2px; background: #f5f6f8; }
.tool { width: 30px; height: 30px; padding: 3px 2px; }
.tool svg { width: 24px; height: 24px; }
.tool.on, .c.on { background: #b7d8fa; border: 1px solid #62a2e4; }
.tool.on { padding: 2px 1px; }

.viewport { width: 1270px; display: grid; grid-template-columns: 17px 1226px 27px; grid-template-rows: 18px 578px 22px; }
.ruler { background: #f0f0f0; shape-rendering: crispEdges; }
.ruler text { font: 8.5px "Open Sans", sans-serif; letter-spacing: -0.2px; fill: #222; }
.canvas { background: #fff; }
.city { font: 19px "Liberation Sans", Arial, sans-serif; letter-spacing: 0; fill: #000; }
.zoom-lock { padding: 2px 0 0 2px; }
.zt { font: bold 6px "Open Sans", sans-serif; letter-spacing: 0; fill: #333; }
.vscroll { width: 15px; margin: 7px 0 3px 3px; display: flex; flex-direction: column; }
.vscroll i { height: 198px; margin: 163px 0 183px; background: #cdcdcd; }
.hscroll { height: 21px; display: flex; padding-top: 1px; border-top: 2px solid #f8f8f8; }
.hscroll i { width: 480px; height: 15px; margin: 0 322px 0 400px; background: #cdcdcd; }
.cms { padding: 2px 0 0 3px; }

.commands { width: 62px; display: flex; gap: 4px; padding: 2px 0 0 3px; background: #f5f6f8; border-left: 1px solid #a5a6a8; }
.col { width: 26px; display: flex; flex-direction: column; }
.c { width: 26px; height: 26px; }
.hs { flex: none; height: 1px; width: 16px; margin: 5px 5px 6px; background: #a5a6a8; }
.more { text-align: center; margin-top: 15px; font-size: 14px; color: #6768a8; }

.dialog { position: absolute; left: 615px; top: 95px; width: 298px; height: 472px; background: #e07366; border: 1px solid #b35a4f; padding: 0 6px 6px; box-shadow: 0 0 5px rgba(0,0,0,.18); }
.d-title { height: 29px; display: flex; }
.d-logo { margin: 6px 5px 0 3px; }
.d-name { width: 164px; font-size: 15px; line-height: 29px; letter-spacing: -0.3px; color: #333; white-space: nowrap; }
.d-close { background: #c75050; margin-left: -1px; }
.d-body { width: 284px; height: 435px; border: 1px solid #b86057; background: #f0f0f0; display: flex; flex-direction: column; }
.row { display: flex; align-items: center; flex: none; height: 23px; }
.row label { width: 36px; padding-right: 4px; text-align: right; }
.field { height: 23px; padding-left: 3px; background: #fff; border: 1px solid #abadb3; line-height: 21px; display: flex; align-items: center; }
.f1 { width: 208px; }
.f2 { width: 238px; }
.caret { width: 1px; height: 15px; background: #000; }
.r1 { margin-top: 5px; }
.r2 { margin-top: 5px; }
.r3 { margin-top: 4px; }
.set { width: 24px; height: 22px; margin-left: 5px; padding: 0; font: inherit; letter-spacing: inherit; color: #000; background: #e9e9e9; border: 1px solid #acacac; }
.desc { margin: 4px 0 0 4px; width: 269px; height: 71px; flex: none; padding: 3px 5px; border: 1px solid #abadb3; box-shadow: inset -1px -1px #fff; }
.desc legend { padding: 0 1px; margin-left: -2px; }
.area { height: 48px; background: #fff; border: 1px solid #a0a0a0; border-right-color: #e3e3e3; border-bottom-color: #e3e3e3; }
.checks { flex: none; display: flex; align-items: center; height: 16px; margin: 7px 0 0 12px; }
.box { width: 13px; height: 13px; margin-right: 6px; background: #fff; border: 1px solid #6e6e6e; }
.hide { width: 112px; }
.expander { flex: none; display: flex; align-items: center; height: 16px; margin: 5px 0 1px 4px; }
.expander i { width: 9px; height: 9px; margin-right: 5px; border: 1px solid #969696; border-radius: 1px; background: linear-gradient(#4058a0, #4058a0) center / 5px 1px no-repeat #f5f5f5; }
.events { display: grid; grid-template-columns: 84px 186px; column-gap: 8px; grid-auto-rows: 23px; }
.events label { text-align: right; line-height: 24px; white-space: nowrap; direction: rtl; }
.events span { background: #fff; border: 1px solid #abadb3; }

.palette { height: 20px; flex: none; display: flex; border-top: 1px solid #999; }
.swatches { width: 1350px; height: 18px; padding-left: 2px; border-top: 1px solid #000; display: flex; overflow: hidden; }
.swatches i, .swatches svg { flex: none; width: 17px; height: 17px; }
.pal-scroll { height: 18px; flex: none; padding-top: 1px; display: flex; border-top: 2px solid #fafafa; }
.pal-scroll i { width: 241px; height: 14px; margin-right: 1078px; background: #cdcdcd; }

.status { height: 28px; flex: none; display: flex; align-items: center; }
.fs-labels { width: 42px; padding-left: 2px; line-height: 14px; display: flex; flex-direction: column; }
.fs-vals { width: 80px; height: 28px; }
.fs-vals i { display: block; height: 14px; background: #000; }
.fs-vals em { display: block; line-height: 14px; text-align: center; }
.o { width: 18px; padding-left: 4px; }
.s-op { width: 27px; }
.ssep { width: 1px; height: 28px; margin-left: 2px; background: #aaa; }
.eye { margin-left: 4px; }
.s-lock { margin: 0 3px 0 4px; opacity: .65; }
.layer { width: 60px; height: 28px; display: flex; background: #fff; border: 1px solid #abadb3; }
.layer b { flex: 1; font-weight: 400; font-size: 11px; line-height: 26px; text-align: center; }
.msg { margin: 0 0 0 5px; width: 915px; white-space: nowrap; letter-spacing: -0.27px; }
.coords { width: 71px; height: 28px; border-left: 1px solid #aaa; padding-left: 3px; display: grid; grid-template-columns: 19px 1fr; grid-auto-rows: 14px; line-height: 14px; }
.coords code { font: 11.5px/14px "Liberation Mono", monospace; letter-spacing: 0; }
.z { width: 13px; padding-left: 2px; }
.s-zoom { width: 46px; padding-left: 6px; }
.grip { margin: 10px 0 0 7px; }
```
FILE: script.js
```js
const NS = 'http://www.w3.org/2000/svg';
const STEP = 79;

function add(parent, tag, attrs, text) {
  const node = document.createElementNS(NS, tag);
  for (const key in attrs) node.setAttribute(key, attrs[key]);
  if (text !== undefined) node.textContent = text;
  parent.appendChild(node);
  return node;
}

// Horizontal ruler: a tick every 5 units, a label every 50
const top_ = document.getElementById('ruler-top');
for (let u = -10; u <= 755; u += 5) {
  const x = Math.round(76.3 + u * STEP / 50);
  const h = u % 50 === 0 ? 15 : u % 10 === 0 ? 6 : 3;
  add(top_, 'rect', { x, y: 102 - h, width: 1, height: h });
  if (u % 50 === 0) add(top_, 'text', { x: x + 1.5, y: 93.5 }, u);
}
add(top_, 'path', { d: 'M1204 95h9l-4.500 5z' });

// Vertical ruler: digits stacked below each major tick
const left = document.getElementById('ruler-left');
for (let u = -10; u <= 350; u += 5) {
  const y = Math.round(659.3 - u * STEP / 50);
  const w = u % 50 === 0 ? 13 : u % 10 === 0 ? 5 : 2;
  add(left, 'rect', { x: 51 - w, y, width: w, height: 1 });
  if (u % 50 === 0) {
    const label = add(left, 'text', { x: 38, y: y + 10 });
    [...String(u)].forEach((d, i) => add(label, 'tspan', { x: 38, dy: i ? 8 : 0 }, d));
  }
}
add(left, 'path', { d: 'M45 315v9l5-4.500z' });

// Default palette
const colours = ('000 1a1a1a 333 4d4d4d 666 808080 999 b3b3b3 ccc e6e6e6 ececec f2f2f2 f9f9f9 fff ' +
  '800000 f00 808000 ff0 008000 0f0 008080 0ff 000080 00f 800080 f0f ' +
  '2b0000 550000 800000 aa0000 d40000 ff0000 ff2a2a ff5555 ff8080 ffaaaa ffd5d5 ' +
  '280b0b 501616 782121 a02c2c c83737 d35f5f de8787 e9afaf f4d7d7 ' +
  '241c1c 483737 6c5353 916f6f ac9393 c8b7b7 e3dbdb ' +
  '2b1100 552200 803300 aa4400 d45500 ff6600 ff7f2a ff9955 ffb380 ffccaa ffe6d5 ' +
  '28170b 502d16 784421 a05a2c c87137 d38d5f deaa87 e9c6af f4e3d7 ' +
  '241f1c 483e37 6c5d53 917c6f ac9d93 c8beb7').split(' ');
const box = document.getElementById('swatches');
box.innerHTML = '<svg viewBox="0 0 17 17"><path d="M0 0h17v17H0z" fill="#fff"/><path d="M0 0l17 17M17 0L0 17" stroke="#7a1010" stroke-width="1.500"/></svg>';
colours.forEach(c => {
  const s = document.createElement('i');
  s.style.background = '#' + c;
  box.appendChild(s);
});
```
